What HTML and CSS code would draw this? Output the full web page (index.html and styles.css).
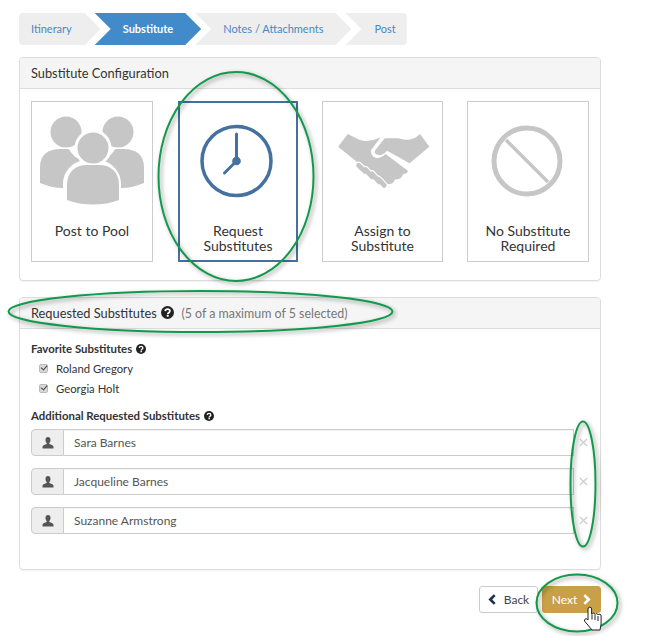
FILE: index.html
```html
<!DOCTYPE html>
<html lang="en">
<head>
<meta charset="utf-8">
<title>Substitute</title>
<link rel="stylesheet" href="styles.css">
</head>
<body>
<svg width="0" height="0" class="defs">
  <symbol id="q" viewBox="0 0 12 12">
    <circle cx="6" cy="6" r="6" fill="#222"/>
    <path d="M3.9 4.7C4 3.4 5 2.9 6.1 2.9c1.2 0 2.1.7 2.1 1.8 0 1.5-2 1.5-2 3" fill="none" stroke="#fff" stroke-width="1.6"/>
    <rect x="5.3" y="8.3" width="1.8" height="1.6" fill="#fff"/>
  </symbol>
  <symbol id="user" viewBox="0 0 12 12">
    <path d="M6 0C4.300 0 3.500 1.200 3.500 2.900c0 1.300.5 2.400 1.200 3.100v1.100C3 7.800.8 8.400.5 9.500V11.500h11V9.500c-.3-1.100-2.500-1.700-4.200-2.400V6c.7-.7 1.200-1.800 1.200-3.100C8.500 1.200 7.700 0 6 0z" fill="#555"/>
  </symbol>
  <symbol id="x" viewBox="0 0 10 10">
    <path d="M1 1l8 8M9 1l-8 8" stroke="#cfcfcf" stroke-width="1.500" fill="none"/>
  </symbol>
</svg>

<main class="page">
  <nav class="steps">
    <a class="step first">Itinerary</a>
    <a class="step active">Substitute</a>
    <a class="step">Notes / Attachments</a>
    <a class="step last">Post</a>
  </nav>

  <section class="panel">
    <h2 class="panel-heading">Substitute Configuration</h2>
    <div class="panel-body cards">
      <div class="card">
        <svg class="card-icon" viewBox="0 0 122 108" width="122" height="108">
          <g fill="#c6c6c6" transform="translate(1 0)">
            <circle cx="34" cy="17" r="15.500"/>
            <circle cx="86" cy="17" r="15.500"/>
            <path d="M8 68V52c0-12 8-18 20-18h9c3 6 8 10 14 11-12 3-20 12-20 24v4c-8 0-16-2-23-5z"/>
            <path d="M112 68V52c0-12-8-18-20-18h-9c-3 6-8 10-14 11 12 3 20 12 20 24v4c8 0 16-2 23-5z"/>
            <circle cx="61" cy="33" r="17" stroke="#fff" stroke-width="3"/>
            <path d="M35 85V70c0-13 8-20 20-20h12c12 0 20 7 20 20v15c-16 6-36 6-52 0z"/>
          </g>
        </svg>
        <span class="card-label">Post to Pool</span>
      </div>
      <div class="card selected">
        <svg class="card-icon" viewBox="0 0 122 108" width="122" height="108">
          <circle cx="59.500" cy="46" r="34.500" fill="none" stroke="#44719f" stroke-width="3.500"/>
          <path d="M59.500 19V46L47.500 58" fill="none" stroke="#44719f" stroke-width="3" stroke-linecap="round"/>
          <circle cx="59.500" cy="46" r="4.300" fill="#44719f"/>
        </svg>
        <span class="card-label">Request<br>Substitutes</span>
      </div>
      <div class="card">
        <svg class="card-icon" viewBox="0 0 122 108" width="122" height="108">
          <g transform="translate(15.500 15) scale(.32 .3333)" fill="#c6c6c6">
            <path d="M2 50L32 12 70 30Q100 38 135 22L105 60Q103 78 120 84 135 86 150 72L220 122Q218 132 205 132 200 150 180 148 175 165 155 162L148 170 60 95Z"/>
            <path d="M148 25 190 25Q230 38 258 12L287 50 225 100 155 62Q135 82 120 72 112 68 120 58L145 28Z"/>
            <g fill="none" stroke-linecap="round">
              <path d="M66 106L86 124M88 119L108 140M108 132L130 155M128 148L146 166" stroke="#fff" stroke-width="22"/>
              <path d="M66 106L86 124M88 119L108 140M108 132L130 155M128 148L146 166" stroke="#c6c6c6" stroke-width="15"/>
            </g>
          </g>
        </svg>
        <span class="card-label">Assign to<br>Substitute</span>
      </div>
      <div class="card">
        <svg class="card-icon" viewBox="0 0 122 108" width="122" height="108">
          <circle cx="60" cy="46" r="33" fill="none" stroke="#c6c6c6" stroke-width="5"/>
          <path d="M39 25L81 67" stroke="#c6c6c6" stroke-width="3.500"/>
        </svg>
        <span class="card-label">No Substitute<br>Required</span>
      </div>
    </div>
  </section>

  <section class="panel second">
    <h2 class="panel-heading">Requested Substitutes
      <svg class="help big"><use href="#q"/></svg>
      <span class="muted">(5 of a maximum of 5 selected)</span>
    </h2>
    <div class="panel-body list">
      <h3 class="label first-label">Favorite Substitutes <svg class="help"><use href="#q"/></svg></h3>
      <label class="check"><input type="checkbox" checked disabled> Roland Gregory</label>
      <label class="check"><input type="checkbox" checked disabled> Georgia Holt</label>
      <h3 class="label additional">Additional Requested Substitutes <svg class="help"><use href="#q"/></svg></h3>
      <div class="rows">
        <div class="row">
          <div class="group"><span class="addon"><svg class="user"><use href="#user"/></svg></span><span class="field">Sara Barnes</span></div>
          <svg class="remove"><use href="#x"/></svg>
        </div>
        <div class="row">
          <div class="group"><span class="addon"><svg class="user"><use href="#user"/></svg></span><span class="field">Jacqueline Barnes</span></div>
          <svg class="remove"><use href="#x"/></svg>
        </div>
        <div class="row">
          <div class="group"><span class="addon"><svg class="user"><use href="#user"/></svg></span><span class="field">Suzanne Armstrong</span></div>
          <svg class="remove"><use href="#x"/></svg>
        </div>
      </div>
    </div>
  </section>

  <div class="actions">
    <button class="btn back"><svg class="chev" viewBox="0 0 8 10"><path d="M6 1L2 5l4 4" fill="none" stroke="#1f3350" stroke-width="2.400"/></svg> Back</button>
    <button class="btn next">Next <svg class="chev" viewBox="0 0 8 10"><path d="M2 1l4 4-4 4" fill="none" stroke="#fff" stroke-width="2.400"/></svg></button>
  </div>
</main>

<svg class="annotations" width="664" height="636" viewBox="0 0 664 636">
  <g fill="none" stroke="#129a4c" stroke-width="2">
    <ellipse cx="236" cy="176.500" rx="77.500" ry="104.500"/>
    <ellipse cx="200.500" cy="311.500" rx="192" ry="20.500"/>
    <ellipse cx="583" cy="484" rx="12.500" ry="62.500"/>
    <ellipse cx="577" cy="603" rx="40.500" ry="28.500"/>
  </g>
  <path class="hand" d="M588 609a1.800 1.800 0 0 1 3.600 0V614h.5a1.600 1.600 0 0 1 3 .5 1.600 1.600 0 0 1 3 .5 1.600 1.600 0 0 1 3 1V624L600 630H592L584.500 621a1.700 1.700 0 0 1 2.500-2L588 620Z"/>
  <path class="hand-lines" d="M592 614.500v5M595 615v5M598 616v5"/>
</svg>
</body>
</html>
```
FILE: styles.css
```css
* { box-sizing: border-box; }
html, body { margin: 0; padding: 0; background: #fff; }
body {
  width: 664px;
  height: 636px;
  overflow: hidden;
  position: relative;
  font-family: Lato, "Open Sans", sans-serif;
  font-size: 12px;
  color: #333;
}
.defs { position: absolute; }
.page { width: 582px; margin-left: 19px; padding-top: 13px; }

.steps { display: flex; height: 32px; font-size: 11px; }
.step {
  height: 32px;
  line-height: 32px;
  padding: 0 28px;
  margin-left: -6px;
  background: #eee;
  color: #428bca;
  white-space: nowrap;
  clip-path: polygon(0 0, calc(100% - 16px) 0, 100% 50%, calc(100% - 16px) 100%, 0 100%, 16px 50%);
}
.step.first {
  margin-left: 0;
  padding: 0 29px 0 12px;
  border-radius: 4px 0 0 4px;
  clip-path: polygon(0 0, calc(100% - 16px) 0, 100% 50%, calc(100% - 16px) 100%, 0 100%);
}
.step.last {
  padding: 0 11px 0 29px;
  border-radius: 0 4px 4px 0;
  clip-path: polygon(0 0, 100% 0, 100% 100%, 0 100%, 16px 50%);
}
.step.active { background: #428bca; color: #fff; font-weight: 700; }

.panel {
  margin-top: 12px;
  border: 1px solid #ddd;
  border-radius: 4px;
  background: #fff;
  box-shadow: 0 1px 1px rgba(0, 0, 0, .05);
}
.panel.second { margin-top: 16px; }
.panel-heading {
  margin: 0;
  height: 31px;
  padding: 0 11px;
  line-height: 30px;
  font-size: 12.800px;
  font-weight: 400;
  color: #333;
  background: #f5f5f5;
  border-bottom: 1px solid #ddd;
  border-radius: 3px 3px 0 0;
}
.muted { color: #777; font-size: 12.400px; margin-left: 4px; }

.cards {
  display: flex;
  gap: 25px;
  padding: 12px 11px 0;
  height: 191px;
}
.card {
  width: 122px;
  height: 161px;
  border: 1px solid #ccc;
  display: flex;
  flex-direction: column;
  align-items: center;
  font-size: 14px;
  line-height: 15px;
  text-align: center;
  color: #333;
}
.card:nth-child(2) { width: 120px; }
.card:nth-child(3) { width: 121px; margin-left: -1px; }
.card:nth-child(4) { margin-left: -1px; }
.card-icon { display: block; margin-top: 13px; flex: none; }
.card.selected { border: 2px solid #44719f; }
.card.selected .card-icon { margin-top: 12px; }

.list { padding: 11px 11px 0; height: 240px; }
.label {
  margin: 0;
  font-size: 11.400px;
  font-weight: 700;
  line-height: 17px;
  color: #333;
}
.first-label { margin-bottom: 1px; }
.label.additional { margin-top: 9px; }
.help { width: 10px; height: 10px; vertical-align: -1px; margin-left: 1px; }
.help.big { width: 13px; height: 13px; vertical-align: -1px; margin-left: 1px; }
.check {
  display: flex;
  align-items: center;
  height: 20px;
  padding-left: 8px;
  gap: 8px;
  font-size: 11.300px;
  color: #333;
}
.check input {
  appearance: none;
  position: relative;
  margin: 0;
  width: 9px;
  height: 9px;
  background: #d9d9d9;
  border: 1px solid #bbb;
  border-radius: 2px;
}
.check input::after {
  content: "";
  position: absolute;
  left: 1.500px;
  top: -.500px;
  width: 3px;
  height: 5px;
  border: solid #444;
  border-width: 0 1.500px 1.500px 0;
  transform: rotate(40deg);
}

.rows { display: flex; flex-direction: column; gap: 12px; margin-top: 5px; }
.row { display: flex; align-items: center; }
.group { display: flex; width: 543px; height: 27px; }
.addon {
  width: 33px;
  background: #eee;
  border: 1px solid #ccc;
  border-radius: 4px 0 0 4px;
  display: flex;
  align-items: center;
  justify-content: center;
}
.user { width: 12px; height: 12px; }
.field {
  flex: 1;
  border: 1px solid #ccc;
  border-left: 0;
  line-height: 25px;
  padding-left: 10px;
  color: #555;
  box-shadow: inset 0 1px 1px rgba(0, 0, 0, .05);
}
.remove { width: 9px; height: 9px; margin-left: 5px; }

.actions { display: flex; justify-content: flex-end; gap: 4px; margin-top: 16px; }
.btn {
  width: 59px;
  height: 27px;
  padding: 0;
  font-family: inherit;
  font-size: 12px;
  border-radius: 3px;
  border: 1px solid #ccc;
  background: #fff;
  color: #444;
  display: flex;
  align-items: center;
  justify-content: center;
  gap: 5px;
}
.btn.back { gap: 7px; }
.btn.next { background: #c9a047; border-color: #c9a047; color: #fff; }
.chev { width: 9px; height: 11px; }

.annotations { position: absolute; left: 0; top: 0; pointer-events: none; }
.annotations g { filter: drop-shadow(2px 2px 2px rgba(0, 0, 0, .4)); }
.hand { fill: #fff; stroke: #222; stroke-width: 1; }
.hand-lines { fill: none; stroke: #222; stroke-width: 1; }
```
